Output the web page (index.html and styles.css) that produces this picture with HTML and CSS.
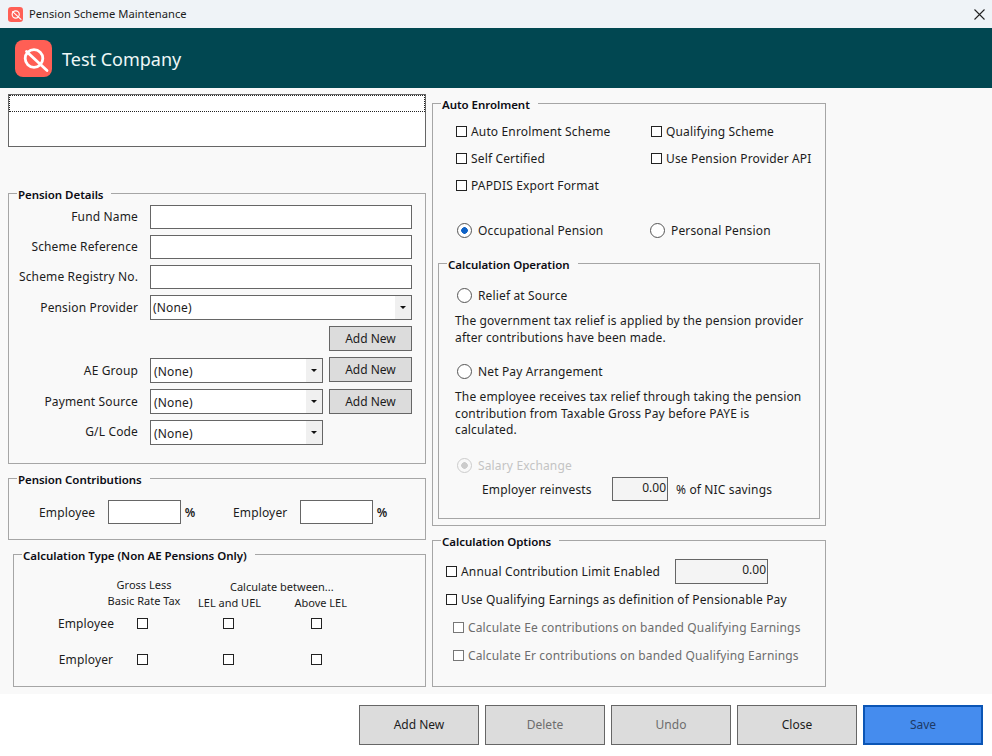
FILE: index.html
```html
<!DOCTYPE html>
<html lang="en">

<head>
    <meta charset="UTF-8">
    <meta name="viewport" content="width=device-width, initial-scale=1.0">
    <title>Pension Scheme Maintenance</title>
    <link rel="stylesheet" href="styles.css">
</head>

<body>

    <svg class="defs" width="0" height="0">
        <symbol id="logo" viewBox="0 0 37 37">
            <rect width="37" height="37" rx="8" fill="#ff5f55" />
            <circle cx="19" cy="18.5" r="8.8" fill="none" stroke="#fff" stroke-width="2.8" />
            <path d="M11.5 11.5 L32 30.5" fill="none" stroke="#fff" stroke-width="2.8" stroke-linecap="round" />
        </symbol>
    </svg>

    <div class="titlebar">
        <svg class="title-icon"><use href="#logo" /></svg>
        <span class="title-text">Pension Scheme Maintenance</span>
        <svg class="title-close" viewBox="0 0 11 11">
            <path d="M0.5 0.5 L10.5 10.5 M10.5 0.5 L0.5 10.5" stroke="#222" stroke-width="1.1" />
        </svg>
    </div>

    <div class="banner">
        <svg class="banner-logo"><use href="#logo" /></svg>
        <span class="banner-text">Test Company</span>
    </div>

    <div class="main">
        <div class="col-left">
            <div class="listbox">
                <div class="list-row"></div>
            </div>

            <fieldset class="group details">
                <legend>Pension Details</legend>
                <div class="details-grid">
                    <label>Fund Name</label>
                    <input class="span2" type="text">
                    <label>Scheme Reference</label>
                    <input class="span2" type="text">
                    <label>Scheme Registry No.</label>
                    <input class="span2" type="text">
                    <label class="low">Pension Provider</label>
                    <div class="combo span2"><span>(None)</span><i class="arrow"></i></div>
                    <button class="btn-add add-first">Add New</button>
                    <label class="lower">AE Group</label>
                    <div class="combo combo-ae"><span>(None)</span><i class="arrow"></i></div>
                    <button class="btn-add">Add New</button>
                    <label class="low">Payment Source</label>
                    <div class="combo"><span>(None)</span><i class="arrow"></i></div>
                    <button class="btn-add">Add New</button>
                    <label>G/L Code</label>
                    <div class="combo"><span>(None)</span><i class="arrow"></i></div>
                </div>
            </fieldset>

            <fieldset class="group contributions">
                <legend>Pension Contributions</legend>
                <div class="contrib-row">
                    <label class="contrib-ee">Employee</label>
                    <input class="contrib-input" type="text">
                    <span class="pct">%</span>
                    <label class="contrib-er">Employer</label>
                    <input class="contrib-input" type="text">
                    <span class="pct">%</span>
                </div>
            </fieldset>

            <fieldset class="group calc-type">
                <legend>Calculation Type (Non AE Pensions Only)</legend>
                <div class="calc-head">
                    <div class="head-gross">Gross Less<br>Basic Rate Tax</div>
                    <div class="head-between">
                        <div class="between-title">Calculate between...</div>
                        <div class="between-cols"><span>LEL and UEL</span><span>Above LEL</span></div>
                    </div>
                </div>
                <div class="calc-grid">
                    <span>Employee</span>
                    <input type="checkbox">
                    <input type="checkbox">
                    <input type="checkbox">
                    <span>Employer</span>
                    <input type="checkbox">
                    <input type="checkbox">
                    <input type="checkbox">
                </div>
            </fieldset>
        </div>

        <div class="col-right">
            <fieldset class="group auto">
                <legend>Auto Enrolment</legend>
                <div class="auto-checks">
                    <label class="check"><input type="checkbox">Auto Enrolment Scheme</label>
                    <label class="check"><input type="checkbox">Qualifying Scheme</label>
                    <label class="check"><input type="checkbox">Self Certified</label>
                    <label class="check"><input type="checkbox">Use Pension Provider API</label>
                    <label class="check"><input type="checkbox">PAPDIS Export Format</label>
                </div>
                <div class="auto-radios">
                    <label class="radio"><input type="radio" name="kind" checked>Occupational Pension</label>
                    <label class="radio"><input type="radio" name="kind">Personal Pension</label>
                </div>

                <fieldset class="group operation">
                    <legend>Calculation Operation</legend>
                    <label class="radio op-first"><input type="radio" name="op">Relief at Source</label>
                    <p>The government tax relief is applied by the pension provider<br>after contributions have been made.</p>
                    <label class="radio op-net"><input type="radio" name="op">Net Pay Arrangement</label>
                    <p class="net-text">The employee receives tax relief through taking the pension<br>contribution from Taxable Gross Pay before PAYE is<br>calculated.</p>
                    <label class="radio op-salary"><input type="radio" name="sal" checked disabled>Salary Exchange</label>
                    <div class="reinvest">
                        <span class="reinvest-label">Employer reinvests</span>
                        <input class="num reinvest-input" type="text" value="0.00" disabled>
                        <span class="reinvest-unit">% of NIC savings</span>
                    </div>
                </fieldset>
            </fieldset>

            <fieldset class="group options">
                <legend>Calculation Options</legend>
                <div class="opt-row">
                    <label class="check"><input type="checkbox">Annual Contribution Limit Enabled</label>
                    <input class="num limit-input" type="text" value="0.00" disabled>
                </div>
                <div class="opt-row">
                    <label class="check"><input type="checkbox">Use Qualifying Earnings as definition of Pensionable Pay</label>
                </div>
                <div class="opt-row sub">
                    <label class="check"><input type="checkbox" disabled>Calculate Ee contributions on banded Qualifying Earnings</label>
                </div>
                <div class="opt-row sub">
                    <label class="check"><input type="checkbox" disabled>Calculate Er contributions on banded Qualifying Earnings</label>
                </div>
            </fieldset>
        </div>
    </div>

    <div class="footer">
        <button class="btn">Add New</button>
        <button class="btn muted">Delete</button>
        <button class="btn muted">Undo</button>
        <button class="btn">Close</button>
        <button class="btn save">Save</button>
    </div>

</body>

</html>
```
FILE: styles.css
```css
html,
body {
    margin: 0;
    height: 756px;
    overflow: hidden;
}

body {
    font-family: "Noto Sans", "Open Sans", Arial, sans-serif;
    font-size: 12px;
    letter-spacing: 0.15px;
    color: #1c1c1c;
    background: #fff;
}

.defs {
    display: block;
    height: 0;
}

.titlebar {
    height: 28px;
    background: #eff3f7;
    display: flex;
    align-items: center;
    padding: 0 6px 0 8px;
}

.title-icon {
    width: 15px;
    height: 15px;
    margin-right: 6px;
}

.title-text {
    flex: 1;
    font-size: 11.2px;
    letter-spacing: 0;
    padding-bottom: 1px;
}

.title-close {
    width: 11px;
    height: 11px;
    margin-right: 1px;
}

.banner {
    height: 60px;
    background: #014751;
    display: flex;
    align-items: center;
    padding-left: 15px;
}

.banner-logo {
    width: 37px;
    height: 37px;
    margin-right: 10px;
}

.banner-text {
    font-size: 18px;
    letter-spacing: 0;
    color: #eef7f7;
    padding-top: 2px;
}

.main {
    height: 606px;
    background: #f9f9f9;
    display: flex;
    gap: 6px;
    padding: 0 8px;
    box-sizing: border-box;
}

.col-left {
    width: 418px;
    padding-top: 6px;
}

.col-right {
    width: 394px;
    padding-top: 7px;
}

.listbox {
    height: 53px;
    box-sizing: border-box;
    border: 1px solid #666;
    background: #fff;
}

.list-row {
    height: 17px;
    box-sizing: border-box;
    border: 1px dotted #222;
}

.group {
    margin: 0;
    padding: 0;
    min-width: 0;
    box-sizing: border-box;
    border: 1px solid #a6a6a6;
}

.group legend {
    margin-left: 8px;
    padding: 0 8px 0 1px;
    height: 16px;
    font-size: 11.5px;
    font-weight: 600;
    letter-spacing: -0.05px;
    line-height: 20px;
    color: #0c0c14;
}

input[type="text"] {
    margin: 0;
    padding: 0 3px;
    box-sizing: border-box;
    border: 1px solid #666;
    background: #fff;
    font: inherit;
    color: #1c1c1c;
}

input[type="checkbox"],
input[type="radio"] {
    appearance: none;
    margin: 0;
    flex: none;
    background: #fff;
    box-sizing: border-box;
}

input[type="checkbox"] {
    width: 11px;
    height: 11px;
    border: 1px solid #222;
}

input[type="checkbox"]:disabled {
    border-color: #777;
}

input[type="radio"] {
    width: 15px;
    height: 15px;
    border: 1px solid #555;
    border-radius: 50%;
}

input[type="radio"]:checked {
    background: radial-gradient(circle, #0f62c6 0 3px, #fff 3.6px);
}

input[type="radio"]:disabled {
    border-color: #ccc;
    background: radial-gradient(circle, #ccc 0 3px, #f9f9f9 3.6px);
}

.check,
.radio {
    display: flex;
    align-items: center;
    white-space: nowrap;
}

.check input {
    margin-right: 4px;
}

.radio input {
    margin-right: 6px;
}

/* left column */
.details {
    height: 279px;
    margin-top: 38px;
}

.details-grid {
    display: grid;
    grid-template-columns: 134px 173px 83px;
    grid-template-rows: 24px 24px 24px 25px 25px 26px 25px 25px;
    column-gap: 6px;
    row-gap: 6px;
    padding: 4px 0 0 1px;
    align-items: start;
}

.details-grid label {
    text-align: right;
    padding: 3px 6px 0 0;
    white-space: nowrap;
}

.details-grid .low {
    padding-top: 4px;
}

.details-grid .lower {
    padding-top: 5px;
}

.span2 {
    grid-column: span 2;
    height: 24px;
}

.combo {
    height: 25px;
    box-sizing: border-box;
    border: 1px solid #666;
    background: #fff;
    display: flex;
    align-items: center;
}

.combo span {
    flex: 1;
    padding: 1px 0 0 3px;
}

.combo.span2 span {
    padding: 0 0 0 2px;
}

.combo-ae {
    margin-top: 1px;
}

.arrow {
    width: 16px;
    align-self: stretch;
    background: #f0f0f0;
    position: relative;
}

.arrow::after {
    content: "";
    position: absolute;
    top: 10px;
    left: 5px;
    border: 3px solid transparent;
    border-top: 3px solid #111;
    border-bottom: 0;
}

.btn-add {
    height: 25px;
    margin: 0;
    padding: 0;
    box-sizing: border-box;
    border: 1px solid #666;
    background: #dcdcdc;
    font: inherit;
    color: #1c1c1c;
}

.add-first {
    grid-column: 3;
}

.contributions {
    height: 70px;
    margin-top: 6px;
}

.contrib-row {
    display: flex;
    align-items: center;
    padding: 14px 0 0 30px;
}

.contrib-input {
    width: 73px;
    height: 24px;
}

.contrib-ee {
    width: 70px;
}

.contrib-er {
    width: 68px;
}

.pct {
    width: 53px;
    padding-left: 4px;
    box-sizing: border-box;
    font-weight: 600;
}

.calc-type {
    height: 141px;
    margin: 6px 0 0 5px;
}

.calc-head {
    display: flex;
    padding: 15px 0 0 93px;
    font-size: 11px;
    letter-spacing: 0;
    line-height: 16px;
}

.head-gross {
    width: 74px;
    text-align: center;
    white-space: nowrap;
}

.head-between {
    width: 149px;
    margin-left: 17px;
    padding-top: 2px;
}

.between-title {
    padding-left: 32px;
    white-space: nowrap;
}

.between-cols {
    display: flex;
    justify-content: space-between;
    white-space: nowrap;
}

.calc-grid {
    display: grid;
    grid-template-columns: 84px 29px 143px 33px;
    grid-template-rows: 24px 48px;
    justify-items: center;
    align-items: center;
    padding-left: 30px;
}

/* right column */
.auto {
    height: 431px;
}

.auto-checks {
    display: grid;
    grid-template-columns: 195px 1fr;
    grid-auto-rows: 27px;
    align-items: center;
    padding: 7px 0 0 23px;
}

.auto-radios {
    display: grid;
    grid-template-columns: 193px 1fr;
    height: 27px;
    align-items: center;
    margin-top: 18px;
    padding-left: 24px;
}

.operation {
    height: 264px;
    margin: 11px 5px 0;
}

.operation p {
    margin: 8px 0 0 16px;
    line-height: 16.5px;
}

.operation .radio {
    height: 20px;
    margin-left: 18px;
}

.op-first {
    margin-top: 14px;
}

.op-net {
    margin-top: 15px;
}

.op-salary {
    margin-top: 17px;
    color: #c4c4c4;
}

.reinvest {
    display: flex;
    align-items: center;
    margin-top: 1px;
}

.reinvest-label {
    width: 130px;
    margin-left: 43px;
    padding-top: 2px;
}

.reinvest-unit {
    padding-top: 2px;
}

input.num {
    text-align: right;
    background: #f4f4f4;
    color: #1c1c1c;
    padding: 0 1px 3px 0;
}

.reinvest-input {
    width: 56px;
    height: 24px;
    margin-right: 8px !important;
}

.options {
    height: 155px;
    margin-top: 6px;
}

.opt-row {
    display: flex;
    align-items: center;
    height: 28px;
    padding-left: 13px;
}

.opt-row:first-of-type {
    margin-top: 9px;
}

.limit-input {
    width: 93px;
    height: 25px;
    margin-left: auto !important;
    margin-right: 57px !important;
}

.sub {
    padding-left: 20px;
    color: #6d6d6d;
}

/* footer */
.footer {
    height: 62px;
    display: flex;
    justify-content: flex-end;
    gap: 6px;
    padding: 11px 9px 0 0;
    box-sizing: border-box;
}

.btn {
    width: 120px;
    height: 40px;
    margin: 0;
    padding: 0 0 2px;
    box-sizing: border-box;
    border: 1px solid #666;
    background: #dcdcdc;
    font: inherit;
    color: #1c1c1c;
}

.muted {
    color: #6d6d6d;
}

.save {
    border: 2px solid #0b55b5;
    background: #458cee;
    color: #1d3a66;
}
```
